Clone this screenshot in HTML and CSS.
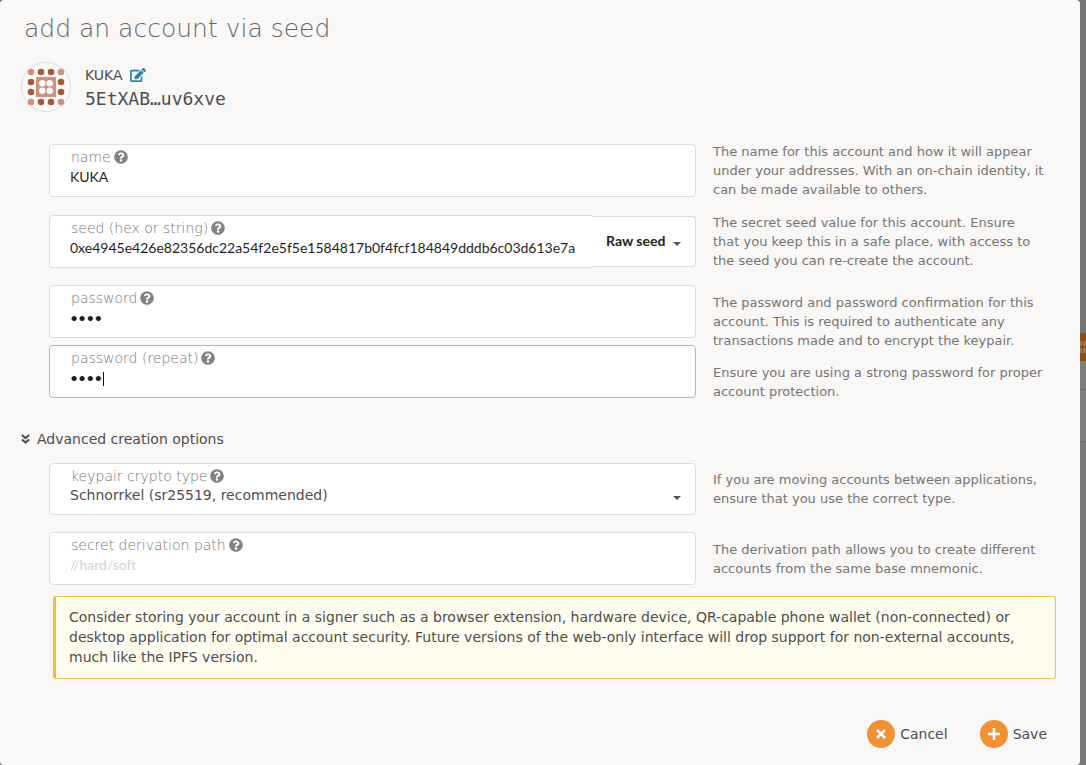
FILE: index.html
```html
<!DOCTYPE html>
<html lang="en">
<head>
<meta charset="utf-8">
<title>Add an account via seed</title>
<link rel="stylesheet" href="styles.css">
</head>
<body>
<svg width="0" height="0" class="defs" aria-hidden="true">
  <symbol id="help" viewBox="0 0 512 512"><path d="M504 256c0 137-111 248-248 248S8 393 8 256C8 119 119 8 256 8s248 111 248 248zM262.700 90c-54.500 0-89.300 23-116.500 63.800-3.600 5.300-2.400 12.400 2.700 16.300l34.700 26.300c5.200 3.900 12.600 3 16.700-2.100 17.900-22.700 30.100-35.800 57.300-35.800 20.400 0 45.700 13.100 45.700 33 0 15-12.400 22.700-32.500 34C247.100 238.500 216 254.900 216 296v4c0 6.600 5.400 12 12 12h56c6.600 0 12-5.400 12-12v-1.300c0-28.500 83.200-29.600 83.200-106.700 0-58-60.200-102-116.500-102zM256 338c-25.400 0-46 20.600-46 46s20.600 46 46 46 46-20.600 46-46-20.600-46-46-46z"/></symbol>
</svg>
<div class="screen">
<main class="modal">
  <h1 class="title">add an account via seed</h1>
  <header class="account">
    <svg class="identicon" viewBox="0 0 50 50" aria-hidden="true">
      <circle cx="25" cy="25" r="24.500" fill="#fbfaf9" stroke="#ddd"/>
      <g fill="#cf917c"><circle cx="10" cy="10" r="3.300"/><circle cx="40" cy="10" r="3.300"/><circle cx="10" cy="40" r="3.300"/><circle cx="40" cy="40" r="3.300"/><path d="M15 15h20v20H15z"/></g>
      <g fill="#a5583d"><circle cx="20" cy="10" r="3.300"/><circle cx="30" cy="10" r="3.300"/><circle cx="20" cy="40" r="3.300"/><circle cx="30" cy="40" r="3.300"/><circle cx="10" cy="20" r="3.300"/><circle cx="10" cy="30" r="3.300"/><circle cx="40" cy="20" r="3.300"/><circle cx="40" cy="30" r="3.300"/></g>
      <g fill="#fff"><circle cx="21.300" cy="21.300" r="3.200"/><circle cx="28.700" cy="21.300" r="3.200"/><circle cx="21.300" cy="28.700" r="3.200"/><circle cx="28.700" cy="28.700" r="3.200"/></g>
    </svg>
    <div>
      <div class="account-name">KUKA
        <button class="edit" type="button" aria-label="Edit name"><svg viewBox="0 0 576 512"><path d="M402.600 83.200l90.200 90.200c3.800 3.800 3.800 10 0 13.800L274.400 405.600l-92.800 10.300c-12.400 1.400-22.900-9.100-21.500-21.500l10.300-92.800L388.800 83.200c3.800-3.800 10-3.800 13.800 0zm162-22.900l-48.800-48.800c-15.200-15.200-39.900-15.200-55.200 0l-35.400 35.400c-3.800 3.800-3.800 10 0 13.800l90.200 90.200c3.800 3.800 10 3.800 13.800 0l35.400-35.400c15.200-15.300 15.200-40 0-55.200zM384 346.200V448H64V128h229.800c3.200 0 6.200-1.300 8.500-3.500l40-40c7.600-7.600 2.200-20.500-8.500-20.500H48C21.500 64 0 85.500 0 112v352c0 26.500 21.500 48 48 48h352c26.500 0 48-21.500 48-48V306.200c0-10.700-12.900-16-20.500-8.500l-40 40c-2.200 2.300-3.500 5.300-3.500 8.500z"/></svg></button>
      </div>
      <div class="address">5EtXAB…uv6xve</div>
    </div>
  </header>

  <form class="form">
    <div class="row">
      <div class="field">
        <label for="name">name <svg class="help"><use href="#help"/></svg></label>
        <input id="name" type="text" value="KUKA">
      </div>
      <p class="hint">The name for this account and how it will appear under your addresses. With an on-chain identity, it can be made available to others.</p>
    </div>
    <div class="row">
      <div class="combo">
        <div class="field">
          <label for="seed">seed (hex or string) <svg class="help"><use href="#help"/></svg></label>
          <input id="seed" type="text" value="0xe4945e426e82356dc22a54f2e5f5e1584817b0f4fcf184849dddb6c03d613e7a">
        </div>
        <div class="seed-type">
          <select aria-label="Seed type"><option>Raw seed</option><option>Mnemonic</option></select>
          <span class="arrow"></span>
        </div>
      </div>
      <p class="hint">The secret seed value for this account. Ensure<br>that you keep this in a safe place, with access to<br>the seed you can re-create the account.</p>
    </div>
    <div class="row row-passwords">
      <div class="stack">
        <div class="field">
          <label for="password">password <svg class="help"><use href="#help"/></svg></label>
          <input id="password" type="password" value="kuka">
        </div>
        <div class="field active">
          <label for="repeat">password (repeat) <svg class="help"><use href="#help"/></svg></label>
          <input id="repeat" type="password" value="kuka">
          <span class="caret"></span>
        </div>
      </div>
      <div class="hints">
        <p class="hint">The password and password confirmation for this account. This is required to authenticate any transactions made and to encrypt the keypair.</p>
        <p class="hint">Ensure you are using a strong password for proper account protection.</p>
      </div>
    </div>

    <button class="toggle" type="button"><svg viewBox="0 0 10 12" aria-hidden="true"><path d="M1 1.500l4 3.500 4-3.500M1 6.500L5 10l4-3.500" fill="none" stroke="currentColor" stroke-width="2.400"/></svg>Advanced creation options</button>

    <div class="row row-short">
      <div class="field field-select">
        <label for="crypto">keypair crypto type <svg class="help"><use href="#help"/></svg></label>
        <select id="crypto"><option>Schnorrkel (sr25519, recommended)</option><option>Edwards (ed25519, alternative)</option></select>
        <span class="arrow"></span>
      </div>
      <p class="hint">If you are moving accounts between applications, ensure that you use the correct type.</p>
    </div>
    <div class="row row-short">
      <div class="field">
        <label for="path">secret derivation path <svg class="help"><use href="#help"/></svg></label>
        <input id="path" type="text" placeholder="//hard/soft">
      </div>
      <p class="hint">The derivation path allows you to create different accounts from the same base mnemonic.</p>
    </div>

    <p class="warning">Consider storing your account in a signer such as a browser extension, hardware device, QR-capable phone wallet (non-connected) or desktop application for optimal account security. Future versions of the web-only interface will drop support for non-external accounts, much like the IPFS version.</p>

    <div class="actions">
      <button type="button"><span class="disc"><svg viewBox="0 0 12 12"><path d="M2 2l8 8M10 2l-8 8"/></svg></span>Cancel</button>
      <button type="submit"><span class="disc"><svg viewBox="0 0 12 12"><path d="M6 0v12M0 6h12"/></svg></span>Save</button>
    </div>
  </form>
</main>
<div class="backdrop"><div class="behind-top"></div><div class="behind-button"><svg viewBox="0 0 6 12"><path d="M0 0h2v5H0zM3 0h3v5H3zM0 7h2v5H0zM3 7h3v5H3z"/></svg></div><div class="behind-row"></div><div class="behind-row tall"></div><div class="behind-rest"></div></div>
</div>
</body>
</html>
```
FILE: styles.css
```css
* { box-sizing: border-box; }
body {
  margin: 0;
  background: #767573;
  color: #4e4e4e;
  font: 14px/20px "DejaVu Sans", sans-serif;
}
h1, p { margin: 0; }
button, input, select {
  margin: 0;
  padding: 0;
  border: 0;
  background: none;
  color: inherit;
  font: inherit;
  appearance: none;
  outline: none;
}
.defs { position: absolute; }
.screen { display: flex; min-height: 100vh; }
.modal {
  flex: 1;
  min-width: 0;
  padding: 13px 24px 16px 21px;
  border-radius: 4px;
  background: #f9f8f7;
}
.title {
  padding-left: 3px;
  color: #666;
  font-size: 25px;
  font-weight: 200;
  line-height: 32px;
}
.account { display: flex; gap: 14px; margin-top: 17px; align-items: center; }
.identicon { width: 50px; height: 50px; }
.account-name { display: flex; align-items: center; gap: 7px; height: 24px; }
.edit { display: flex; color: #2e86ab; }
.edit svg { width: 16px; height: 14px; fill: currentColor; }
.address { height: 24px; font: 18px/24px "DejaVu Sans Mono", monospace; }
.form { margin-top: 30px; }
.row {
  display: grid;
  grid-template-columns: minmax(0, 647fr) minmax(0, 343fr);
  column-gap: 17px;
  align-items: center;
  padding-left: 28px;
  margin-top: 14px;
}
.row-passwords { align-items: start; margin-top: 15px; }
.stack { display: grid; gap: 7px; }
.hints { display: grid; gap: 13px; padding-top: 8px; }
.hint { color: #767573; font-size: 13px; line-height: 19px; }
.field {
  position: relative;
  display: flex;
  flex-direction: column;
  min-width: 0;
  height: 53px;
  padding: 3px 20px 0;
  border: 1px solid #dcdcdd;
  border-radius: 4px;
  background: #fff;
}
.field-select { height: 52px; }
.field.active { border-color: #a3bdc9; }
.field label {
  display: flex;
  align-items: flex-start;
  gap: 3px;
  padding-left: 1px;
  color: #777;
  font-weight: 200;
  line-height: 19px;
}
.help { width: 14px; height: 14px; margin-top: 2px; fill: #828282; }
.field input { height: 20px; color: #1f1f1f; font: 14px/20px Lato, sans-serif; }
.field input::placeholder { color: #d2d2d2; }
.field select { height: 19px; line-height: 19px; }
.caret {
  position: absolute;
  left: 53px;
  top: 26px;
  width: 1px;
  height: 14px;
  background: #111;
}
.arrow {
  position: absolute;
  right: 14px;
  bottom: 14px;
  border: 4px solid transparent;
  border-top-color: #555;
  border-bottom: 0;
}
.combo { display: flex; align-items: center; }
.combo .field {
  flex: 1;
  padding-right: 0;
  border-right: 0;
  border-radius: 4px 0 0 4px;
}
.seed-type {
  position: relative;
  width: 104px;
  height: 51px;
  border: 1px solid #dcdcdd;
  border-left: 0;
  border-radius: 0 4px 4px 0;
  background: #fff;
}
.seed-type select {
  display: block;
  width: 100%;
  height: 48px;
  padding-left: 14px;
  color: #222;
  font: bold 14px/20px Lato, sans-serif;
}
.seed-type .arrow { bottom: 20px; }
.toggle { display: flex; align-items: center; gap: 7px; margin-top: 28px; }
.toggle svg { width: 9px; height: 12px; }
.row-short { margin-top: 17px; }
.toggle + .row-short { margin-top: 14px; }
.warning {
  margin: 11px 0 0 32px;
  padding: 10px 13px 11px;
  border: 1px solid #e6c84a;
  border-left: 3px solid #f2c02e;
  border-radius: 3px;
  background: #fffdf0;
}
.actions { display: flex; justify-content: flex-end; gap: 32px; margin-top: 41px; padding-right: 9px; }
.actions button { display: flex; align-items: center; gap: 5px; }
.disc {
  display: grid;
  place-items: center;
  width: 28px;
  height: 28px;
  border-radius: 50%;
  background: #f19135;
}
.disc svg { width: 12px; height: 12px; stroke: #fff; stroke-width: 2.5; }
.backdrop { display: flex; flex-direction: column; width: 6px; background: #767573; }
.behind-top { height: 333px; }
.behind-button { display: flex; align-items: center; height: 28px; background: #8a5014; }
.behind-button svg { width: 6px; height: 12px; fill: #8a7a68; }
.behind-row { height: 29px; border-bottom: 1px solid #6a6a6a; background: #7e7e7e; }
.behind-row.tall { height: 52px; }
.behind-rest { flex: 1; background: #7a7a79; }
```
